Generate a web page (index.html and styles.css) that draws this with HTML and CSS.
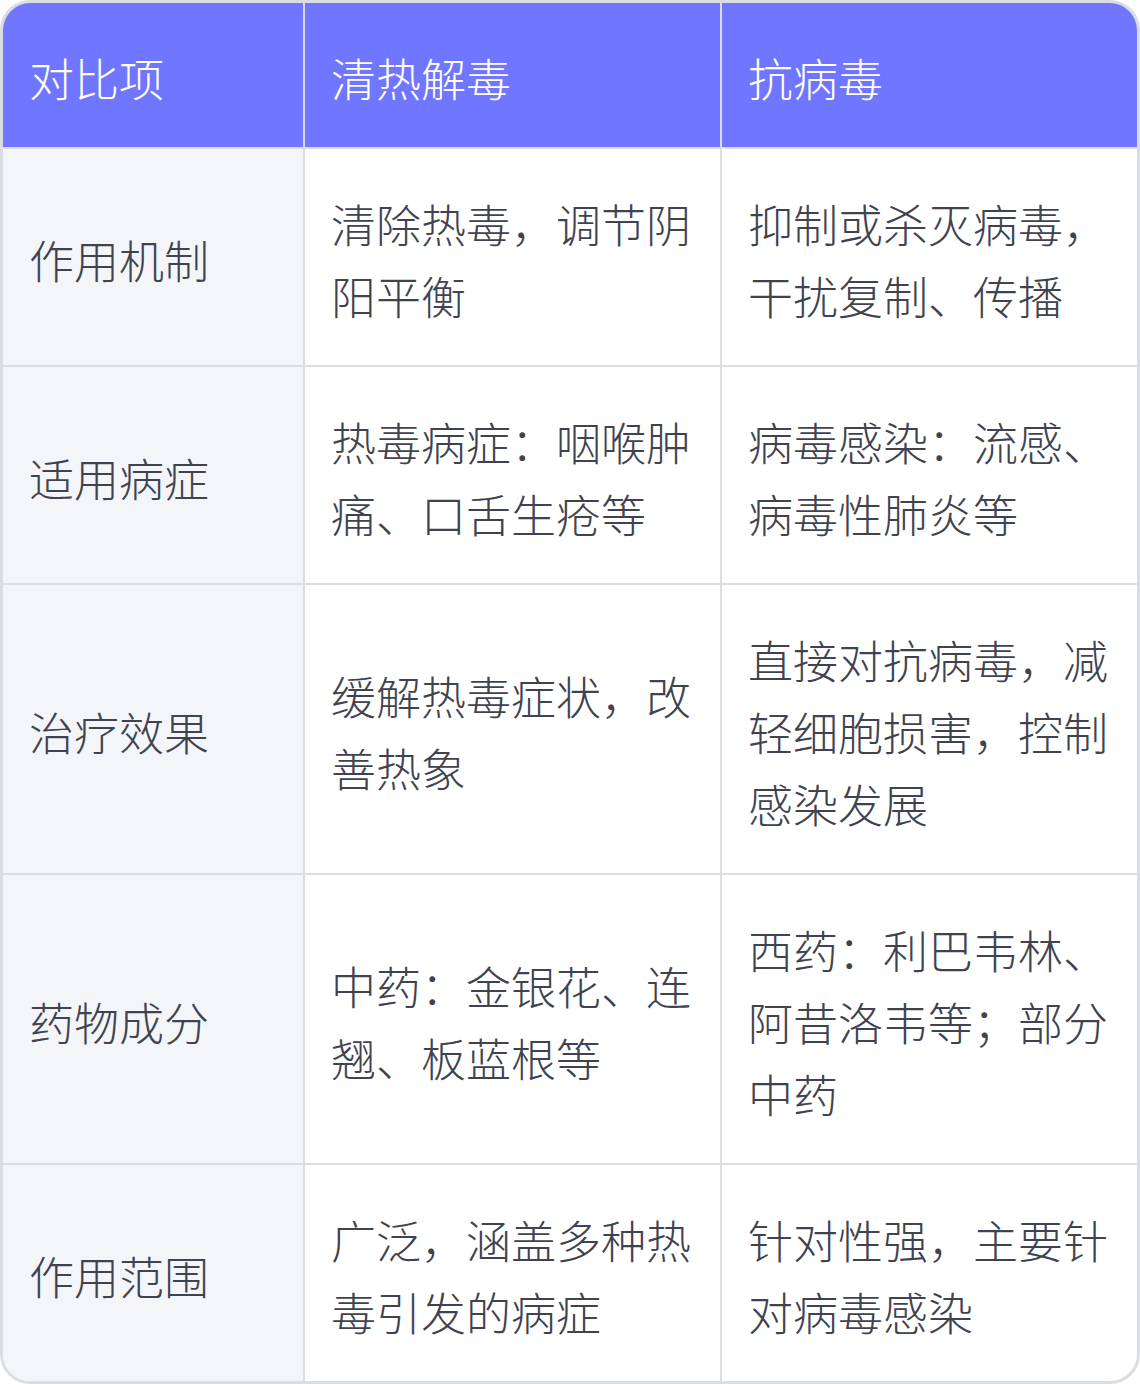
FILE: index.html
```html
<!DOCTYPE html>
<html lang="zh-CN">
<head>
<meta charset="utf-8">
<link rel="stylesheet" href="styles.css">
</head>
<body>
<div class="card">
  <table class="cmp">
    <colgroup>
      <col class="c1"><col class="c2"><col class="c3">
    </colgroup>
    <thead>
      <tr><th>对比项</th><th>清热解毒</th><th>抗病毒</th></tr>
    </thead>
    <tbody>
      <tr><td class="key">作用机制</td><td>清除热毒，调节阴阳平衡</td><td>抑制或杀灭病毒，干扰复制、传播</td></tr>
      <tr><td class="key">适用病症</td><td>热毒病症：咽喉肿痛、口舌生疮等</td><td>病毒感染：流感、病毒性肺炎等</td></tr>
      <tr><td class="key">治疗效果</td><td>缓解热毒症状，改善热象</td><td>直接对抗病毒，减轻细胞损害，控制感染发展</td></tr>
      <tr><td class="key">药物成分</td><td>中药：金银花、连翘、板蓝根等</td><td>西药：利巴韦林、阿昔洛韦等；部分中药</td></tr>
      <tr><td class="key">作用范围</td><td>广泛，涵盖多种热毒引发的病症</td><td>针对性强，主要针对病毒感染</td></tr>
    </tbody>
  </table>
</div>
</body>
</html>
```

FILE: styles.css
```css
html, body {
  margin: 0;
  padding: 0;
  background: #ffffff;
}
body {
  font-family: "Noto Sans CJK SC", "Noto Sans", sans-serif;
  font-weight: 300;
}
.card {
  width: 1140px;
  height: 1384px;
  box-sizing: border-box;
  border: 3px solid #dcdde3;
  border-radius: 30px;
  overflow: hidden;
  background: #ffffff;
}
.cmp {
  width: 100%;
  border-collapse: collapse;
  table-layout: fixed;
}
.c1 { width: 301px; }
.c2 { width: 417px; }
.c3 { width: 416px; }
.cmp th, .cmp td {
  padding: 39px 26px 33px;
  font-size: 45px;
  line-height: 72px;
  text-align: left;
  vertical-align: middle;
  color: #40434f;
  font-weight: 300;
  border: 2px solid #dcdde3;
}
.cmp tr > :first-child { border-left: none; }
.cmp tr > :last-child { border-right: none; }
.cmp thead th {
  border-top: none;
  background: #7076ff;
  color: #ffffff;
}
.cmp tbody tr:last-child td { border-bottom: none; }
.cmp td.key {
  background: #f4f5f9;
}
```
